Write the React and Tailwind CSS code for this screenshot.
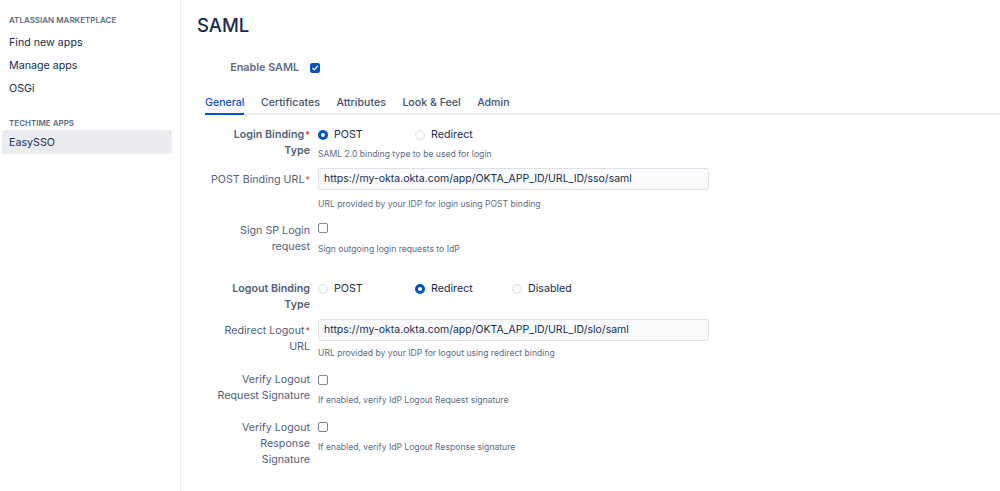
import { useState } from 'react';

const font = { fontFamily: 'Inter, "Noto Sans", sans-serif' };

const Radio = ({ checked, label }) => (
    <div className="flex items-center w-[97px] h-[16px]">
        {checked ? (
            <span className="w-[10px] h-[10px] rounded-full bg-[#0052cc] flex items-center justify-center">
                <span className="w-[4px] h-[4px] rounded-full bg-white"></span>
            </span>
        ) : (
            <span className="w-[10px] h-[10px] rounded-full border border-[#dfe1e6] bg-[#fafbfc]"></span>
        )}
        <span className="ml-[6px] text-[10.7px] text-[#172b4d]">{label}</span>
    </div>
);

const Checkbox = ({ checked }) =>
    checked ? (
        <span className="w-[10px] h-[10px] rounded-[2px] bg-[#0052cc] flex items-center justify-center">
            <svg viewBox="0 0 10 10" className="w-[8px] h-[8px]">
                <path d="M2 5.2 L4.2 7.3 L8 2.8" fill="none" stroke="white" strokeWidth="1.6" strokeLinecap="round" strokeLinejoin="round" />
            </svg>
        </span>
    ) : (
        <span className="block w-[10px] h-[10px] rounded-[2px] border border-[#7a869a] bg-white"></span>
    );

const Req = () => <span className="text-[#de350b] text-[9px] align-top ml-[1px]">*</span>;

const Desc = ({ children, className = '' }) => (
    <p className={`text-[8.6px] leading-[12px] text-[#5e6c84] ${className}`}>{children}</p>
);

const Row = ({ label, className = '', labelClass = '', children }) => (
    <div className={`flex ${className}`}>
        <div className={`w-[113px] shrink-0 text-right text-[10.7px] leading-[16px] text-[#505f79] ${labelClass}`}>{label}</div>
        <div className="ml-[8px] flex-1">{children}</div>
    </div>
);

const Input = ({ value }) => (
    <div className="w-[391px] h-[22px] border border-[#dfe1e6] bg-[#fafbfc] rounded-[3px] flex items-center px-[5px] text-[10.5px] text-[#172b4d]">
        {value}
    </div>
);

export default function App() {
    const [tab] = useState('General');
    const tabs = ['General', 'Certificates', 'Attributes', 'Look & Feel', 'Admin'];

    return (
        <div className="w-[1000px] h-[491px] bg-white flex overflow-hidden" style={font}>
            {/* Sidebar */}
            <aside className="w-[181px] shrink-0 border-r border-[#ebecf0] pt-[15px]">
                <div className="px-[9px] text-[8px] font-semibold text-[#5e6c84] leading-[11px]">ATLASSIAN MARKETPLACE</div>
                <div className="mt-[5px] text-[10.7px] text-[#172b4d]">
                    <div className="px-[9px] h-[23px] leading-[23px]">Find new apps</div>
                    <div className="px-[9px] h-[23px] leading-[23px]">Manage apps</div>
                    <div className="px-[9px] h-[23px] leading-[23px]">OSGi</div>
                </div>
                <div className="mt-[18px] px-[9px] text-[8px] font-semibold text-[#5e6c84] leading-[11px]">TECHTIME APPS</div>
                <div className="mt-[1px] mx-[2px] w-[170px] h-[24px] rounded-[3px] bg-[#ebecf0] px-[7px] leading-[25px] text-[10.7px] text-[#172b4d]">EasySSO</div>
            </aside>

            {/* Main */}
            <main className="flex-1 pl-[16px]">
                <h1 className="mt-[11px] text-[18.5px] leading-[28px] font-medium text-[#172b4d]">SAML</h1>

                <div className="mt-[21px] flex items-center h-[16px]">
                    <div className="w-[102px] text-right text-[10.8px] font-semibold text-[#5e6c84]">Enable SAML</div>
                    <div className="ml-[11px]"><Checkbox checked /></div>
                </div>

                {/* Tabs */}
                <div className="mt-[19px] ml-[8px] flex border-b-2 border-[#ebecf0] text-[10.6px]">
                    {tabs.map((t) => (
                        <div
                            key={t}
                            className={`mr-[16.5px] pb-[2px] -mb-[2px] border-b-2 leading-[16px] font-medium ${t === tab ? 'border-[#0052cc] text-[#0052cc]' : 'border-transparent text-[#42526e]'}`}
                        >
                            {t}
                        </div>
                    ))}
                </div>

                {/* Form */}
                <Row className="mt-[12px]" labelClass="font-semibold" label={<>Login Binding<Req /><br />Type</>}>
                    <div className="flex">
                        <Radio checked label="POST" />
                        <Radio label="Redirect" />
                    </div>
                    <Desc className="mt-[5px]">SAML 2.0 binding type to be used for login</Desc>
                </Row>

                <Row className="mt-[8px]" label={<div className="pt-[4px]">POST Binding URL<Req /></div>}>
                    <Input value="https://my-okta.okta.com/app/OKTA_APP_ID/URL_ID/sso/saml" />
                    <Desc className="mt-[8px]">URL provided by your IDP for login using POST binding</Desc>
                </Row>

                <Row className="mt-[13px]" label={<>Sign SP Login<br />request</>}>
                    <Checkbox />
                    <Desc className="mt-[10px]">Sign outgoing login requests to IdP</Desc>
                </Row>

                <Row className="mt-[26px]" labelClass="font-semibold" label={<>Logout Binding<br />Type</>}>
                    <div className="flex">
                        <Radio label="POST" />
                        <Radio checked label="Redirect" />
                        <Radio label="Disabled" />
                    </div>
                </Row>

                <Row className="mt-[6px]" label={<div className="pt-[4px]">Redirect Logout<Req /><br />URL</div>}>
                    <Input value="https://my-okta.okta.com/app/OKTA_APP_ID/URL_ID/slo/saml" />
                    <Desc className="mt-[6px]">URL provided by your IDP for logout using redirect binding</Desc>
                </Row>

                <Row className="mt-[13px]" label={<>Verify Logout<br />Request Signature</>}>
                    <div className="pt-[3px]"><Checkbox /></div>
                    <Desc className="mt-[9px]">If enabled, verify IdP Logout Request signature</Desc>
                </Row>

                <Row className="mt-[14px]" label={<>Verify Logout<br />Response<br />Signature</>}>
                    <div className="pt-[2px]"><Checkbox /></div>
                    <Desc className="mt-[9px]">If enabled, verify IdP Logout Response signature</Desc>
                </Row>
            </main>
        </div>
    );
}
